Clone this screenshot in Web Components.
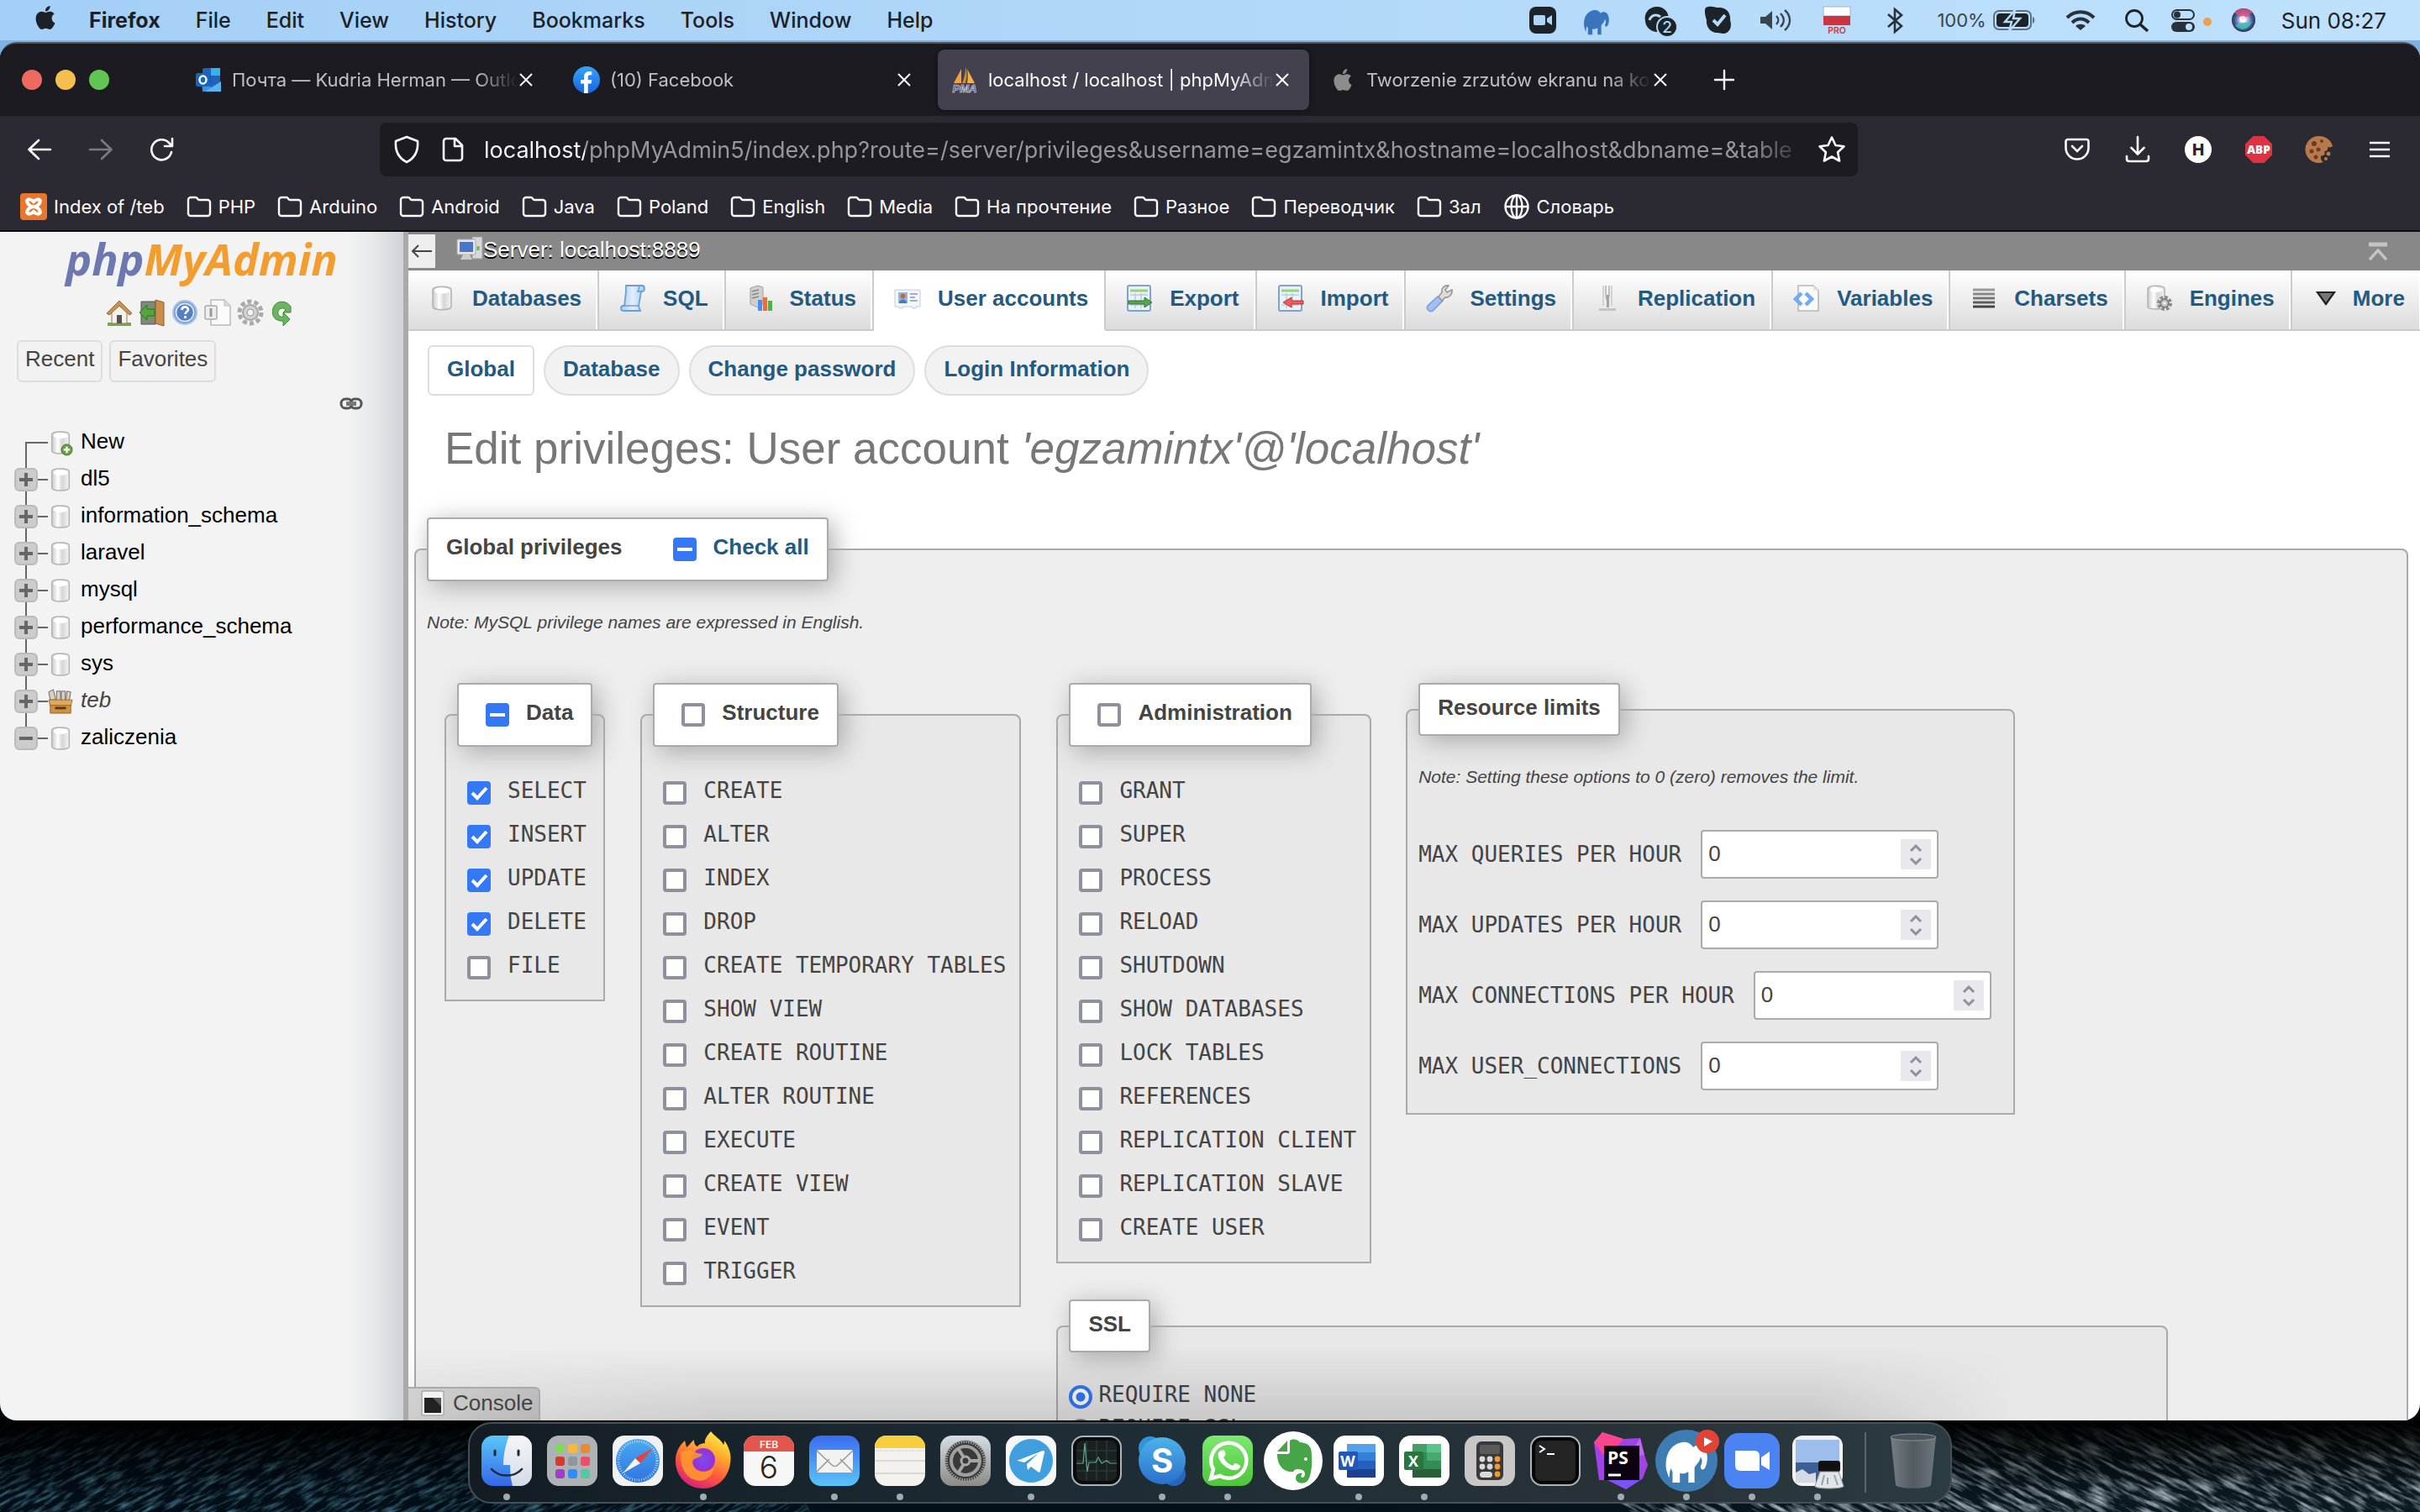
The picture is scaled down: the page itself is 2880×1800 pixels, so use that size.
<!DOCTYPE html>
<html lang="en">
<head>
<meta charset="utf-8">
<title>localhost / localhost | phpMyAdmin</title>
<style>
html,body{margin:0;height:100%}
body{background:linear-gradient(#7fb2e2 50%,#01070b 50%);font-family:"Liberation Sans",Arial,sans-serif;font-size:26px;color:#444;overflow:hidden}
</style>
</head>
<body>
<mac-desktop></mac-desktop>
<script>
const APPLE='<path d="M12.152 6.896c-.948 0-2.415-1.078-3.96-1.04-2.04.027-3.91 1.183-4.961 3.014-2.117 3.675-.546 9.103 1.519 12.09 1.013 1.454 2.208 3.09 3.792 3.039 1.52-.065 2.09-.987 3.935-.987 1.831 0 2.35.987 3.96.948 1.637-.026 2.676-1.48 3.676-2.948 1.156-1.688 1.636-3.325 1.662-3.415-.039-.013-3.182-1.221-3.22-4.857-.026-3.04 2.48-4.494 2.597-4.559-1.429-2.09-3.623-2.324-4.39-2.376-2-.156-3.675 1.09-4.61 1.09zM15.53 3.83c.843-1.012 1.4-2.427 1.245-3.83-1.207.052-2.662.805-3.532 1.818-.78.896-1.454 2.338-1.273 3.714 1.338.104 2.715-.688 3.559-1.701"/>';
const CYL='<linearGradient id="c" x1="0" x2="1"><stop offset="0" stop-color="#c8c8c8"/><stop offset=".35" stop-color="#fff"/><stop offset=".6" stop-color="#d6d6d6"/><stop offset="1" stop-color="#f4f4f4"/></linearGradient>';
const ELE='M5 30C3 18 8 9 17 7c5-1 8 1 10 4 3-3 8-2 10 2 2 4 2 10 0 14-1 3-4 3-4 0 1-3 2-5 0-8-1 5-4 6-5 9v12h-5v-9c-3 2-5 2-7 1v8h-6v-9c-1-1-1-2-1-3-2 3-1 6-2 8z';
const box=(w,h,s)=>[w,h,s];
/* each entry: width, height, drawing */
const ICONS={
apple:box(24,24,`<g fill="#1b2127">${APPLE}</g>`),
appleGray:box(24,24,`<g fill="#8c8c8c">${APPLE}</g>`),
mbZoom:box(40,48,'<rect x="4" y="8" width="32" height="32" rx="8" fill="#1d2429"/><rect x="9" y="18" width="14" height="12" rx="2" fill="#aed6f9"/><path d="M25 22l6-4v12l-6-4z" fill="#aed6f9"/>'),
mbEle:box(48,48,`<path transform="translate(1 6) scale(.88)" d="${ELE}" fill="#3a74bd"/>`),
mbCC:box(48,48,'<path d="M20 8c9 0 14 7 14 15a14 14 0 0 1-28 2C4 16 10 8 20 8z" fill="#1d2429"/><path d="M11 24c2-6 8-8 13-4" stroke="#b0d8f9" stroke-width="3" fill="none"/><circle cx="32" cy="32" r="12" fill="#1d2429" stroke="#b0d8f9" stroke-width="2"/><text x="32" y="39" font-family="Inter,sans-serif" font-size="19" text-anchor="middle" fill="#b0d8f9">2</text>'),
mbSkype:box(44,48,'<path d="M6 9c6-3 11 0 16 0 9 0 14 7 13 15 2 6 1 12-4 15-4 2-8 0-11 0-9 0-14-8-13-15C5 18 4 12 6 9z" fill="#1d2429"/><path d="M15 24l5 5 9-11" fill="none" stroke="#b3daf9" stroke-width="4"/>'),
mbVol:box(50,48,'<path d="M3 20h6l8-7v22l-8-7H3z" fill="#38444e"/><path d="M22 19c3 3 3 7 0 10M27 16c5 5 5 11 0 16M32 12c8 7 8 17 0 24" fill="none" stroke="#38444e" stroke-width="2.4"/>'),
mbFlag:box(50,48,'<rect x="4" y="8" width="32" height="11" fill="#fff" stroke="#9db5c8"/><rect x="4" y="19" width="32" height="11" fill="#cf3340"/><text x="20" y="40" font-family="Inter,sans-serif" font-size="10.5" font-weight="600" text-anchor="middle" fill="#c93a4b">PRO</text>'),
mbBt:box(41,48,'<path d="M7 17l16 14-8 7V11l8 7L7 32" fill="none" stroke="#27323b" stroke-width="2.6"/>'),
mbBat:box(60,48,'<rect x="1" y="13" width="44" height="22" rx="6" fill="none" stroke="#5d7280" stroke-width="2"/><rect x="4" y="16" width="38" height="16" rx="4" fill="#1d2429"/><path d="M47 20v8c3-1 3-7 0-8" fill="#5d7280"/><path d="M26 12l-12 14h8l-3 11 13-15h-8z" fill="#1d2429" stroke="#b7dcfa" stroke-width="2.5"/>'),
mbWifi:box(48,48,'<g fill="none" stroke="#27323b" stroke-width="4"><path d="M4 21c9-9 23-9 32 0"/><path d="M10 27c6-6 14-6 20 0"/></g><path d="M14 31c3-3 9-3 12 0l-6 5z" fill="#27323b"/>'),
mbFind:box(32,48,'<circle cx="12" cy="22" r="9.5" fill="none" stroke="#1d2429" stroke-width="2.8"/><path d="M19 29l9 8" stroke="#1d2429" stroke-width="3.4"/>'),
mbCtl:box(48,48,'<rect x="1" y="12" width="26" height="11" rx="5.5" fill="none" stroke="#27323b" stroke-width="2"/><circle cx="7" cy="17.500" r="4" fill="#27323b"/><rect x="0" y="26" width="28" height="12" rx="6" fill="#27323b"/><circle cx="21" cy="32" r="4" fill="#bfe0fb"/><circle cx="43" cy="26" r="5" fill="#eda04e"/>'),
mbSiri:box(37,48,'<radialGradient id="g"><stop offset="0" stop-color="#fff"/><stop offset=".35" stop-color="#c7b2e8"/><stop offset=".7" stop-color="#3e6aa5"/><stop offset="1" stop-color="#3a2c4c"/></radialGradient><circle cx="14" cy="24" r="14" fill="url(#g)"/><path d="M3 15c6-7 16-5 22-1-4 4-8 6-12 10-3-4-6-6-10-9z" fill="#e0507f" opacity=".8"/><path d="M4 30c5 7 15 7 20-4-7 1-12 0-20 4z" fill="#3fc0b0" opacity=".85"/><circle cx="13" cy="23" r="4" fill="#fff" opacity=".8"/>'),
outlook:box(32,32,'<rect x="9" y="2" width="21" height="26" rx="2" fill="#1f64b8"/><path d="M19 2h11v9H19z" fill="#35b1ee"/><path d="M9 11h10v9H9z" fill="#1550a0"/><path d="M8 18l12 7 11-7v12H9z" fill="#3b94da"/><path d="M31 18v12H12z" fill="#56b6f0"/><rect x="1" y="8" width="17" height="16" rx="2" fill="#1566bf"/><ellipse cx="9.500" cy="16" rx="4" ry="4.600" fill="none" stroke="#fff" stroke-width="2.400"/>'),
facebook:box(32,32,'<linearGradient id="f" x2="0" y2="1"><stop stop-color="#35a4f8"/><stop offset="1" stop-color="#1a63e0"/></linearGradient><circle cx="16" cy="16" r="16" fill="url(#f)"/><path d="M13 32V20.500H9V16h4v-3.500C13 8.500 15.500 6 19.300 6c1.500 0 3 .3 3 .3v4h-2c-2 0-2.600 1.200-2.600 2.500V16h4.600l-.8 4.500h-3.800V32z" fill="#fff"/>'),
pma:box(32,32,'<path d="M12 3L3 20h9z" fill="#f0a03c"/><path d="M17 0c2 7 2 13 0 20h-4C16 13 17 7 17 0z" fill="#d98a26"/><path d="M19 3l9 17h-9c1-6 1-11 0-17z" fill="#f6b04a"/><text x="16" y="31" font-family="Liberation Sans" font-size="13" font-weight="700" font-style="italic" text-anchor="middle" fill="#3a3f68" stroke="#e9e9f4" stroke-width=".6">PMA</text>'),
close:box(16,16,'<path d="M1 1l14 14M15 1L1 15" stroke="#fbfbfe" stroke-width="2"/>'),
plus:box(24,24,'<path d="M12 1v22M1 12h22" stroke="#fbfbfe" stroke-width="2.400" stroke-linecap="round"/>'),
back:box(30,28,'<path d="M28 14H3M14 3L2.500 14 14 25" fill="none" stroke="#fbfbfe" stroke-width="2.600" stroke-linecap="round" stroke-linejoin="round"/>'),
fwd:box(30,28,'<path d="M2 14h25M16 3l11.500 11L16 25" fill="none" stroke="#7b7a82" stroke-width="2.600" stroke-linecap="round" stroke-linejoin="round"/>'),
reload:box(30,28,'<path d="M26 17a12 12 0 1 1-3-11l3 3M27 1v9h-9" fill="none" stroke="#fbfbfe" stroke-width="2.600" stroke-linecap="round" stroke-linejoin="round"/>'),
shield:box(32,34,'<path d="M16 2l13 5c1 12-3 20-13 25C6 27 2 19 3 7z" fill="none" stroke="#fbfbfe" stroke-width="2.600" stroke-linejoin="round"/>'),
page:box(26,30,'<path d="M5 2h11l8 8v15a3 3 0 0 1-3 3H5a3 3 0 0 1-3-3V5a3 3 0 0 1 3-3zM15 2v9h9" fill="none" stroke="#fbfbfe" stroke-width="2.600" stroke-linejoin="round"/>'),
star:box(34,34,'<path d="M17 2.500l4.500 9.500 10 1.300-7.400 7 2 10.200L17 25.500 7.900 30.500l2-10.200-7.400-7 10-1.300z" fill="none" stroke="#fbfbfe" stroke-width="2.600" stroke-linejoin="round"/>'),
pocket:box(32,32,'<path d="M5 4h22c1.500 0 2.500 1 2.500 2.500V14a13.500 13.500 0 0 1-27 0V6.500C2.500 5 3.500 4 5 4z" fill="none" stroke="#fbfbfe" stroke-width="2.600"/><path d="M10 12l6 6 6-6" fill="none" stroke="#fbfbfe" stroke-width="2.600" stroke-linecap="round"/>'),
download:box(32,32,'<path d="M16 1v20M8.500 14l7.500 7.500 7.500-7.500M3 24v3c0 2 1 3 3 3h20c2 0 3-1 3-3v-3" fill="none" stroke="#fbfbfe" stroke-width="2.600" stroke-linecap="round" stroke-linejoin="round"/>'),
hbadge:box(32,32,'<circle cx="16" cy="16" r="16" fill="#fff"/><text x="16" y="23" font-family="Inter,sans-serif" font-size="19" font-weight="800" text-anchor="middle" fill="#25242c">H</text>'),
abp:box(32,32,'<path d="M9.500 0h13L32 9.500v13L22.500 32h-13L0 22.500v-13z" fill="#de3343"/><text x="16" y="21" font-family="Open Sans,sans-serif" font-size="13.500" font-weight="800" text-anchor="middle" fill="#fff">ABP</text>'),
cookie:box(32,32,'<path d="M16 0a16 16 0 1 0 5 31c-3-2-4-5-2-8 3 1 5-2 3-5 3 0 5-2 4-5 3 1 5 0 6-1C30 4 23 0 16 0z" fill="#b87a4b"/><g fill="#6d3d20"><circle cx="10" cy="9" r="3"/><circle cx="19" cy="6" r="2"/><circle cx="7" cy="18" r="2.500"/><circle cx="15" cy="16" r="2.500"/><circle cx="12" cy="25" r="2.500"/></g><circle cx="27" cy="21" r="2.500" fill="#b87a4b"/><circle cx="24" cy="27" r="2" fill="#b87a4b"/>'),
burger:box(32,32,'<path d="M4 8h24M4 16h24M4 24h24" stroke="#fbfbfe" stroke-width="2.600"/>'),
xampp:box(32,32,'<rect width="32" height="32" rx="4" fill="#e8762c"/><g fill="none" stroke="#fff" stroke-width="4"><path d="M8 8c0 5 4 8 8 8s8-3 8-8M8 24c0-5 4-8 8-8s8 3 8 8"/><path d="M8 10c1-4 5-3 8 0 3-3 7-4 8 0M8 22c1 4 5 3 8 0 3 3 7 4 8 0"/></g>'),
folder:box(30,26,'<path d="M2 5a3 3 0 0 1 3-3h6c2 0 2 3 4 3h10a3 3 0 0 1 3 3v13a3 3 0 0 1-3 3H5a3 3 0 0 1-3-3z" fill="none" stroke="#fbfbfe" stroke-width="2.400"/>'),
globe:box(32,32,'<g fill="none" stroke="#fbfbfe" stroke-width="2.400"><circle cx="16" cy="16" r="13.500"/><ellipse cx="16" cy="16" rx="6.500" ry="13.500"/><path d="M2.500 16h27M16 2.500v27"/></g>'),
home:box(32,32,'<path d="M2 28h28v4H2z" fill="#7ba545"/><path d="M7 15v14h18V15l-9-9z" fill="#f4f0ea" stroke="#8d7f6f"/><path d="M13 19h6v10h-6z" fill="#555"/><path d="M1 17L16 2l15 15-3 2L16 8 4 19z" fill="#c89454" stroke="#94683a"/>'),
exit:box(32,32,'<path d="M3 3h17v27H3z" fill="#7d8b75" stroke="#555"/><path d="M20 1l10 3v28l-10-3z" fill="#c98e4b" stroke="#8e5c2b"/><path d="M1 16l9-9v5h9v8h-9v5z" fill="#52a63b" stroke="#2b741c"/>'),
help:box(32,32,'<circle cx="16" cy="16" r="14" fill="#7fa4d9" stroke="#a8c0e4" stroke-width="2"/><circle cx="16" cy="16" r="10.500" fill="#5580c4" stroke="#e4edf9" stroke-width="1.500"/><path d="M12.500 13c0-5 7.500-4.500 7.500-.5 0 2.500-3.500 2.500-3.500 5.500M16.500 20v3" fill="none" stroke="#fff" stroke-width="2.600"/>'),
docs:box(32,32,'<path d="M8 1h16l7 7v23H8z" fill="#fbfbfb" stroke="#bbb" stroke-width="1.500"/><path d="M24 1v7h7" fill="#ddd" stroke="#bbb"/><rect x="1" y="8" width="14" height="16" rx="2" fill="#eee" stroke="#aaa" stroke-width="1.500"/><path d="M8 11v10" stroke="#999" stroke-width="3"/>'),
gear:box(32,32,'<circle cx="16" cy="16" r="13" fill="none" stroke="#a9a9a9" stroke-width="5" stroke-dasharray="5 3.170"/><circle cx="16" cy="16" r="9" fill="#d2d2d2" stroke="#a5a5a5" stroke-width="2"/><circle cx="16" cy="16" r="4" fill="#f3f3f3" stroke="#999"/>'),
sync:box(32,32,'<path d="M25 9C20 1 7 1 4 11c-3 10 4 16 12 15v6l8-8-8-8v5c-4 1-7-2-6-6 1-5 7-5 9-2l-3 3h9z" fill="#6cb560" stroke="#3c8a37"/>'),
link:box(28,18,'<g fill="none" stroke="#555" stroke-width="3"><rect x="2" y="3" width="13" height="11" rx="5"/><rect x="13" y="3" width="13" height="11" rx="5"/></g><rect x="8" y="6" width="12" height="5" fill="#777"/>'),
db:box(32,32,CYL+'<path d="M5 6C5 1 27 1 27 6v20c0 5-22 5-22 0z" fill="url(#c)" stroke="#b4b4b4" stroke-width="1.600"/><ellipse cx="16" cy="7" rx="9" ry="3.500" fill="#fff"/>'),
dbNew:box(32,32,CYL+'<path d="M5 6C5 1 27 1 27 6v20c0 5-22 5-22 0z" fill="url(#c)" stroke="#b4b4b4" stroke-width="1.600"/><ellipse cx="16" cy="7" rx="9" ry="3.500" fill="#fff"/><circle cx="24" cy="25" r="7" fill="#62a33b" stroke="#3f7c20"/><path d="M24 21v8M20 25h8" stroke="#fff" stroke-width="2.500"/>'),
box:box(32,32,'<path d="M3 14L1 4l6-3 3 13zM11 3h5v12h-5zM17 3h5v12h-5zM24 3l5 1-2 11h-4z" fill="#d9d2b8" stroke="#6c5a7c"/><path d="M1 14h30l-2 8H3z" fill="#e0a95f" stroke="#a26d27"/><path d="M3 21h26v10H3z" fill="#cf9146" stroke="#96621f"/><path d="M9 23h14v3H9z" fill="#5b3a12"/>'),
server:box(32,32,'<path d="M19 1h12v26H19z" fill="#d8d8d8" stroke="#999"/><rect x="1" y="4" width="22" height="18" rx="1" fill="#e6e6e6" stroke="#aaa"/><rect x="4" y="7" width="16" height="12" fill="#4976c6"/><path d="M8 22h8l3 6H5z" fill="#ccc"/><path d="M26 12v5" stroke="#5b5" stroke-width="3"/>'),
sql:box(32,32,'<linearGradient id="s" x2="1"><stop stop-color="#a9ccf2"/><stop offset=".5" stop-color="#e2effd"/><stop offset="1" stop-color="#a9ccf2"/></linearGradient><path d="M8 1h19c4 0 4 7 0 7h-1l-3 17 2 6H5c-4 0-4-6 0-6h1L8 8z" fill="url(#s)" stroke="#6e9fd2" stroke-width="1.800"/><path d="M5 25h18M26 8h-4c2-2 1-5 2-7" fill="none" stroke="#6e9fd2" stroke-width="1.500"/>'),
status:box(32,32,'<path d="M5 4l9-3 6 2v20l-6 4-9-4z" fill="#cfcfcf" stroke="#a0a0a0"/><path d="M7 8l8-2M7 12l8-2M7 16l8-2" stroke="#888" stroke-width="1.500"/><path d="M14 18h5v13h-5z" fill="#4c8df0"/><path d="M20 15h5v16h-5z" fill="#ef6b40"/><path d="M26 19h5v12h-5z" fill="#52b052"/>'),
user:box(32,32,'<path d="M1 6h30v20h-5v2h-4v-2H10v2H6v-2H1z" fill="#f4f6f9" stroke="#c6ccd4"/><rect x="5" y="9" width="11" height="13" fill="#8db9ee"/><circle cx="10.500" cy="13.500" r="3" fill="#b3713e"/><path d="M6 22c0-6 9-6 9 0z" fill="#4a78c0"/><path d="M19 11h9M19 15h6M19 19h9" stroke="#9bb1ca" stroke-width="2"/>'),
exp:box(32,32,'<rect x="2" y="1" width="27" height="30" rx="2" fill="#eaf2fc" stroke="#7da3d3" stroke-width="2"/><path d="M5 7h21" stroke="#9fd06f" stroke-width="3"/><path d="M5 12h21M5 24h21M11 10v18M18 10v18" stroke="#b9cbe3" stroke-width="1.500"/><path d="M3 19h19v-4l9 6-9 6v-4H3z" fill="#5aa350" stroke="#35762d"/>'),
imp:box(32,32,'<rect x="2" y="1" width="27" height="30" rx="2" fill="#eaf2fc" stroke="#7da3d3" stroke-width="2"/><path d="M5 7h21" stroke="#9fd06f" stroke-width="3"/><path d="M5 12h21M5 24h21M11 10v18M18 10v18" stroke="#b9cbe3" stroke-width="1.500"/><path d="M31 19H17v-4l-10 6 10 6v-4h14z" fill="#ec5f5f" stroke="#c52f2f"/>'),
wrench:box(32,32,'<path d="M14 14l6 5-12 12c-4 2-8-2-6-6z" fill="#a3bff0" stroke="#7d9cdc" stroke-width="1.600"/><path d="M15 14l4-5c-1-5 3-9 8-8l-4 5 2 3 6-3c1 5-4 10-8 9l-4 4z" fill="#ddd" stroke="#999" stroke-width="1.600"/>'),
repl:box(32,32,'<path d="M11 1v24M21 1v24" fill="none" stroke="#d2d2d2" stroke-width="2"/><path d="M14 1v12l2 8 2-8V1" fill="none" stroke="#b0b0b0" stroke-width="1.500"/><path d="M15 12h3v15h-3z" fill="#a4a4a4"/><path d="M6 28h20v3H6z" fill="#c4c4c4"/>'),
vars:box(32,32,'<path d="M6 1h18l6 6v24H6z" fill="#fafafa" stroke="#b8b8b8" stroke-width="1.600"/><path d="M24 1v6h6" fill="#e4e4e4"/><path d="M10 10l-7 7 7 7M15 10l7 7-7 7" fill="none" stroke="#6fabed" stroke-width="4.500"/>'),
chars:box(32,32,'<path d="M3 6h26" stroke="#999" stroke-width="3"/><path d="M3 11h26" stroke="#888" stroke-width="3"/><path d="M3 16h26" stroke="#777" stroke-width="3"/><path d="M3 21h26" stroke="#5f5f5f" stroke-width="3"/><path d="M3 26h26" stroke="#444" stroke-width="3"/>'),
engine:box(32,32,CYL+'<path d="M2 5C2 0 22 0 22 5v21c0 4-20 4-20 0z" fill="url(#c)" stroke="#b4b4b4" stroke-width="1.600"/><ellipse cx="12" cy="6" rx="7" ry="3" fill="#fff"/><circle cx="22" cy="22" r="7" fill="none" stroke="#8b8b8b" stroke-width="4" stroke-dasharray="3.500 2"/><circle cx="22" cy="22" r="5" fill="#bbb" stroke="#777" stroke-width="1.500"/><circle cx="22" cy="22" r="2" fill="#eee"/>'),
more:box(24,20,'<path d="M2 3h20L12 17z" fill="#777" stroke="#222" stroke-width="2.200"/>'),
toTop:box(24,24,'<path d="M1 4h22" stroke="#c4c4c4" stroke-width="5"/><path d="M2 22l10-11 10 11" fill="none" stroke="#c4c4c4" stroke-width="3.400"/>'),
larr:box(26,20,'<path d="M25 10H2M9 3l-7 7 7 7" fill="none" stroke="#444" stroke-width="2"/>'),
console:box(32,32,'<rect x="3" y="1" width="26" height="29" rx="2" fill="#f2f2f2" stroke="#aaa" stroke-width="1.500"/><rect x="6" y="9" width="20" height="18" fill="#222"/><path d="M16 9h10v10z" fill="#555"/>'),
spin:box(36,36,'<path d="M12 14l6-6 6 6M12 23l6 6 6-6" fill="none" stroke="#8f8f9d" stroke-width="3"/>'),
/* dock */
dFinder:box(60,60,'<linearGradient id="a" x2="0" y2="1"><stop stop-color="#5ac8fa"/><stop offset="1" stop-color="#3466e8"/></linearGradient><linearGradient id="b" x2="0" y2="1"><stop stop-color="#f6f6f8"/><stop offset="1" stop-color="#d4dae6"/></linearGradient><rect width="60" height="60" rx="14" fill="url(#a)"/><path d="M33 0h13a14 14 0 0 1 14 14v32a14 14 0 0 1-14 14h-9c-2-7-3-15-3-25h-8C26 22 29 10 33 0z" fill="url(#b)"/><path d="M16 18v5M44 18v5" stroke="#1c2b3c" stroke-width="3" stroke-linecap="round"/><path d="M12 40c9 10 27 10 36 0" fill="none" stroke="#1c2b3c" stroke-width="2.600" stroke-linecap="round"/>'),
dLaunch:box(60,60,'<rect width="60" height="60" rx="14" fill="#aeb2b4"/>'+['#7ed957','#f6b93b','#ee8a2e','#d43a2d','#8e979c','#ef4d68','#a13ec9','#2f8df5','#4fcba2'].map((c,i)=>`<rect x="${10+i%3*15}" y="${10+(i/3|0)*15}" width="11" height="11" rx="3" fill="${c}"/>`).join('')),
dSafari:box(60,60,'<linearGradient id="a" x2="0" y2="1"><stop stop-color="#4aa9f2"/><stop offset="1" stop-color="#2f74e0"/></linearGradient><rect width="60" height="60" rx="14" fill="#f1f1f3"/><circle cx="30" cy="30" r="26" fill="url(#a)"/><circle cx="30" cy="30" r="23" fill="none" stroke="#cfe4fa" stroke-width="3" stroke-dasharray=".8 2"/><path d="M48 15L33 33l-6-6z" fill="#e8413a"/><path d="M12 45l15-18 6 6z" fill="#f4f4f4"/>'),
dFox:box(60,60,'<linearGradient id="a" x1=".8" x2=".3" y2="1"><stop stop-color="#fff44f"/><stop offset=".3" stop-color="#ffb42e"/><stop offset=".65" stop-color="#ff5a3c"/><stop offset="1" stop-color="#d5207c"/></linearGradient><radialGradient id="b"><stop stop-color="#7a4cf0"/><stop offset="1" stop-color="#9b2fd0"/></radialGradient><path d="M39-5c4 6 12 9 15 16 1-2 1-4 1-5 6 8 9 18 7 27-2 17-15 30-32 30C12 63-2 50-3 32-4 22 1 12 8 6l2 8c4-3 5-6 9-9 0 4 1 7 4 8 2-3 6-4 9-4-1-5 3-9 7-14z" fill="url(#a)"/><circle cx="30" cy="29" r="14" fill="url(#b)"/><path d="M3 20c6-3 14-3 20 1l6 1c-2 5-8 4-11 7-2 3 0 9 5 12 7 4 16 1 20-4-1 12-12 19-22 16C8 50 2 36 3 20z" fill="#ff9a2e" opacity=".85"/>'),
dCal:box(60,60,'<rect width="60" height="60" rx="14" fill="#f8f7f7"/><path d="M0 19v-5A14 14 0 0 1 14 0h32a14 14 0 0 1 14 14v5z" fill="#e2564c"/><text x="30" y="15" font-family="Inter,sans-serif" font-size="12" font-weight="600" text-anchor="middle" fill="#fff">FEB</text><text x="30" y="51" font-family="Inter,sans-serif" font-size="37" font-weight="300" text-anchor="middle" fill="#222">6</text>'),
dMail:box(60,60,'<linearGradient id="a" x2="0" y2="1"><stop stop-color="#3a6df0"/><stop offset="1" stop-color="#5ac4f8"/></linearGradient><rect width="60" height="60" rx="14" fill="url(#a)"/><rect x="9" y="17" width="43" height="27" rx="2" fill="#f2f2f2"/><path d="M9 43l15-15M52 43L37 28M9 18l18 17c2 2 5 2 7 0l18-17" fill="none" stroke="#9a9a9a" stroke-width="1.600"/>'),
dNotes:box(60,60,'<rect width="60" height="60" rx="14" fill="#f4f2ee"/><path d="M0 15v-1A14 14 0 0 1 14 0h32a14 14 0 0 1 14 14v1z" fill="#f8cd3e"/><path d="M0 18h60" stroke="#bbb" stroke-dasharray="1 1"/><path d="M0 30h60M0 45h60" stroke="#d2d0cc" stroke-width="1.600"/>'),
dPrefs:box(60,60,'<linearGradient id="a" x2="0" y2="1"><stop stop-color="#d5dde4"/><stop offset="1" stop-color="#8b8a88"/></linearGradient><rect width="60" height="60" rx="14" fill="url(#a)"/><circle cx="30" cy="30" r="24" fill="#3a3a3a"/><circle cx="30" cy="30" r="23" fill="none" stroke="#9a9a9a" stroke-width="4" stroke-dasharray="1.600 1.400"/><circle cx="30" cy="30" r="17" fill="none" stroke="#9f9f9f" stroke-width="4"/><circle cx="30" cy="30" r="5" fill="none" stroke="#aaa" stroke-width="3"/><path d="M34 30h13M28 34l-7 11M28 26l-7-11" stroke="#a5a5a5" stroke-width="4"/>'),
dTele:box(60,60,'<rect width="60" height="60" rx="14" fill="#f5f6f7"/><circle cx="30" cy="30" r="26" fill="#419fdd"/><path d="M13 30l31-12c1 0 2 0 2 2l-5 22c0 2-2 2-3 1l-8-6-4 4-1-7 14-13-17 11-8-2z" fill="#fff"/>'),
dAct:box(60,60,'<rect x="1" y="1" width="58" height="58" rx="13" fill="#0b0b0b" stroke="#a9b6bb" stroke-width="2"/><rect x="6" y="6" width="48" height="48" rx="7" fill="#18211f"/><path d="M6 18h48M6 30h48M6 42h48M18 6v48M30 6v48M42 6v48" stroke="#35443f"/><path d="M6 33h8l2-24 3 34 2-11h8l3-6 4 7 6-3 4 3h8" fill="none" stroke="#5fa88f" stroke-width="1.200"/>'),
dSkype:box(60,60,'<linearGradient id="a" x2="0" y2="1"><stop stop-color="#4db2ea"/><stop offset="1" stop-color="#2a70cb"/></linearGradient><circle cx="16" cy="15" r="14" fill="#2f93d8"/><circle cx="44" cy="46" r="14" fill="#2766bd"/><circle cx="30" cy="30" r="28" fill="url(#a)"/><text x="30" y="44" font-family="Inter,sans-serif" font-size="40" font-weight="700" text-anchor="middle" fill="#fff">S</text>'),
dWhats:box(60,60,'<linearGradient id="a" x2="0" y2="1"><stop stop-color="#7bea70"/><stop offset="1" stop-color="#4fc43a"/></linearGradient><rect width="60" height="60" rx="14" fill="url(#a)"/><path d="M10 51l3-11a21 21 0 1 1 8 8z" fill="none" stroke="#fff" stroke-width="4.500"/><path d="M22 18c3-2 4-1 5 2 1 4 0 4-2 6 3 5 6 8 11 10 2-3 3-4 6-2 4 2 4 3 2 5-7 8-28-7-25-18 0-1 1-2 3-3z" fill="#fff"/>'),
dEver:box(60,60,'<circle cx="30" cy="30" r="35" fill="#fff"/><path d="M11 22h12c2 0 3-1 3-3V6c4-3 10-1 12 2 10 1 14 4 14 16 1 12-1 25-5 30-4 4-13 4-14-3 0-5 4-7 8-6-2 2-2 5 0 5 4-1 4-7 0-9-4-1-8-3-11 2-10 1-19-6-19-21z" fill="#45a547"/><circle cx="45" cy="28" r="2" fill="#fff"/><path d="M11 19L23 6v13z" fill="#45a547"/>'),
dWord:box(60,60,'<rect width="60" height="60" rx="14" fill="#fff"/><path d="M16 10h34v10H16z" fill="#54a3ea"/><path d="M16 20h34v10H16z" fill="#3380d8"/><path d="M16 30h34v10H16z" fill="#2560bd"/><path d="M16 40h34v10H16z" fill="#1c3f8f"/><rect x="6" y="19" width="23" height="22" rx="2" fill="#2256b8"/><text x="17" y="37" font-family="Open Sans,sans-serif" font-size="18" font-weight="700" text-anchor="middle" fill="#fff">W</text>'),
dExcel:box(60,60,'<rect width="60" height="60" rx="14" fill="#fff"/><path d="M16 10h34v40H16z" fill="#348a52"/><path d="M33 10h17v10H33z" fill="#5dc48d"/><path d="M33 20h17v10H33z" fill="#46a96d"/><path d="M16 10h17v10H16z" fill="#429f66"/><path d="M16 40h34v10H16z" fill="#285f38"/><rect x="6" y="19" width="23" height="22" rx="2" fill="#2a7640"/><text x="17" y="37" font-family="Open Sans,sans-serif" font-size="18" font-weight="700" text-anchor="middle" fill="#fff">X</text>'),
dCalc:box(60,60,'<rect width="60" height="60" rx="14" fill="#c9c7c5"/><rect x="14" y="7" width="32" height="46" rx="6" fill="#39393b"/><rect x="18" y="11" width="24" height="11" rx="2" fill="#5a5a5c"/>'+[[21,28],[30,28],[39,28,1],[21,37],[30,37],[39,37,1],[39,46,1]].map(([x,y,o])=>`<circle cx="${x}" cy="${y}" r="3.400" fill="${o?'#f49a2c':'#d9d9d9'}"/>`).join('')+'<rect x="18" y="43" width="15" height="7" rx="3.500" fill="#d9d9d9"/>'),
dTerm:box(60,60,'<rect x="1" y="1" width="58" height="58" rx="13" fill="#050505" stroke="#a9b6bb" stroke-width="2"/><rect x="6" y="6" width="48" height="48" rx="7" fill="#232323"/><path d="M11 12l6 4-6 4M20 22h9" fill="none" stroke="#fff" stroke-width="2"/>'),
dPS:box(60,60,'<path d="M-2 8L8-4l25 8 20-1 5 20 4 12-6 16-20 13-22-11H4z" fill="#a243e8"/><path d="M-2 8L8-4l25 8-20 24z" fill="#fb4590"/><path d="M53 3l5 20-20 4z" fill="#bf63f2"/><path d="M36 64L16 53l20-15 20 13z" fill="#7b52f5"/><rect x="10" y="12" width="42" height="41" fill="#0b0312"/><text x="14" y="34" font-family="Open Sans,sans-serif" font-size="21" font-weight="700" fill="#fff">PS</text><path d="M15 47h15" stroke="#fff" stroke-width="3"/>'),
dMamp:box(60,60,`<circle cx="30" cy="30" r="37" fill="#3d7db3"/><path transform="translate(-1 -2) scale(1.450)" d="${ELE}" fill="#fff"/><circle cx="55" cy="7" r="14" fill="#e04437"/><path d="M51 2l10 5-10 6z" fill="#fff"/>`),
dZoom:box(60,60,'<rect x="-3" y="-3" width="66" height="66" rx="17" fill="#4b83f3"/><path d="M10 18h22c5 0 7 2 7 7v17H17c-5 0-7-2-7-7z" fill="#fff"/><path d="M41 26l10-7v22l-10-6z" fill="#fff"/>'),
dPrev:box(60,60,'<rect width="60" height="60" rx="12" fill="#f3f2f0"/><path d="M4 5h52v28H4z" fill="#9dbdec"/><path d="M4 32h52v24H4z" fill="#3c5f95"/><path d="M4 44l8-4 8 6 8-2v12H4z" fill="#d5dbe2"/><rect x="31" y="30" width="26" height="13" rx="3" fill="#111"/><path d="M33 43h22l6 17c1 4-36 4-34 0z" fill="#e2e6e9" stroke="#8f979f"/><path d="M38 47l-3 12M50 47l4 12M42 50v8" stroke="#9aa3ab" stroke-width="2" fill="none"/>'),
dTrash:box(60,60,'<linearGradient id="a" x2="1"><stop stop-color="#7d858a"/><stop offset=".5" stop-color="#565f64"/><stop offset="1" stop-color="#757d82"/></linearGradient><path d="M3 1h54l-6 58c-3 5-39 5-42 0z" fill="url(#a)" opacity=".9"/><ellipse cx="30" cy="2" rx="27" ry="4" fill="#4b5458" stroke="#899196"/>')
};
function define(name,css,html,fn){
  customElements.define(name,class extends HTMLElement{
    connectedCallback(){
      if(this.shadowRoot)return;
      const r=this.attachShadow({mode:'open'});
      r.innerHTML=`<style>:host{display:block;box-sizing:border-box}*{box-sizing:border-box}button{font:inherit;color:inherit;background:none;border:0;padding:0;margin:0}a{color:inherit;text-decoration:none}${css}</style>`+(typeof html==='function'?html(this):html);
      if(fn)fn(this,r);
    }
  });
}
define('ui-icon',':host{display:inline-flex;flex:none}svg{display:block;overflow:visible}',el=>{
  const [w,h,s]=ICONS[el.getAttribute('name')];
  const W=+el.getAttribute('size')||w,H=W*h/w;
  return `<svg width="${W}" height="${H}" viewBox="0 0 ${w} ${h}" aria-hidden="true">${s}</svg>`;
});

/* ---- system menu bar ---- */
define('mac-menubar',
`:host{display:flex;align-items:center;height:48px;flex:none;padding:0 40px;background:linear-gradient(90deg,#a4cff6,#bfe1fc);color:#1b2127;font:500 25px Inter,sans-serif}
nav{display:flex;gap:42px;align-items:center;flex:1}nav ui-icon{margin-right:-4px}b{font-weight:700}
.r{display:flex;gap:24px;align-items:center}.bat{display:flex;gap:8px;align-items:center;font-size:22px;font-weight:400;color:#38444e}
.time{font-weight:400;font-size:26px;margin-left:-2px}ui-icon{flex:none}`,
`<nav><button aria-label="Apple"><ui-icon name="apple" size="28"></ui-icon></button><button><b>Firefox</b></button>${['File','Edit','View','History','Bookmarks','Tools','Window','Help'].map(t=>`<button>${t}</button>`).join('')}</nav>
<div class="r">${['mbZoom','mbEle','mbCC','mbSkype','mbVol','mbFlag','mbBt'].map(n=>`<ui-icon name="${n}"></ui-icon>`).join('')}<span class="bat"><span>100%</span><ui-icon name="mbBat"></ui-icon></span>${['mbWifi','mbFind','mbCtl','mbSiri'].map(n=>`<ui-icon name="${n}"></ui-icon>`).join('')}<span class="time">Sun 08:27</span></div>`);

/* ---- browser chrome ---- */
define('browser-tab',
`:host{display:flex;align-items:center;width:442px;height:72px;margin-right:8px;padding:0 24px 0 16px;gap:12px;border-radius:8px;color:#c0c0c4;font:400 22px Inter,sans-serif}
:host([active]){background:#42414d;color:#fbfbfe;box-shadow:0 0 6px #0008}
span{flex:1;overflow:hidden;white-space:nowrap;-webkit-mask:linear-gradient(90deg,#000 calc(100% - 50px),#0000)}button{display:flex}
.i{width:32px;justify-content:center}.c{margin-left:-10px}`,
el=>`<ui-icon class="i" name="${el.getAttribute('icon')}" size="${el.getAttribute('icon')=='appleGray'?26:32}"></ui-icon><span><slot></slot></span><button class="c" aria-label="Close tab"><ui-icon name="close"></ui-icon></button>`);
define('book-mark',
`:host{flex:none}a{display:flex;align-items:center;gap:8px;font:400 22px Inter,sans-serif;color:#fbfbfe;white-space:nowrap}`,
el=>`<a href="#"><ui-icon name="${el.getAttribute('icon')||'folder'}"></ui-icon><slot></slot></a>`);
define('browser-chrome',
`:host{flex:none;background:#2b2a33;border-bottom:2px solid #0c0c0e}
.tabs{display:flex;align-items:center;height:86px;background:#1c1b22;padding-left:26px}
.lights{display:flex;gap:16px;width:190px}.lights i{width:24px;height:24px;border-radius:50%}
.plus{width:72px;display:flex;justify-content:center}
.bar{display:flex;align-items:center;height:80px;padding:0 32px}
.nav{display:flex;gap:43px;width:420px;align-items:center}
.url{flex:1;display:flex;align-items:center;height:64px;border-radius:8px;background:#1c1b22;padding:0 14px 0 16px}
input{flex:1;min-width:0;border:0;outline:0;background:none;margin:0 10px 0 24px;padding:0;height:40px;font:400 27px Inter,sans-serif;color:#a09fa6;text-overflow:clip;background:linear-gradient(90deg,#fbfbfe 120px,#98979f 120px calc(100% - 70px),#1c1b22);-webkit-background-clip:text;background-clip:text;-webkit-text-fill-color:transparent}
.page{margin-left:26px;display:flex}
.ext{display:flex;gap:40px;margin-left:245px;align-items:center}button{display:flex}
.marks{display:flex;align-items:center;gap:26px;height:56px;padding-left:24px}`,
`<div class="tabs"><div class="lights"><i style="background:#ed6a5e"></i><i style="background:#f5bf4f"></i><i style="background:#61c554"></i></div>
<browser-tab icon="outlook">Почта — Kudria Herman — Outlook</browser-tab><browser-tab icon="facebook">(10) Facebook</browser-tab><browser-tab icon="pma" active>localhost / localhost | phpMyAdmin</browser-tab><browser-tab icon="appleGray">Tworzenie zrzutów ekranu na komputerze</browser-tab><button class="plus" aria-label="New tab"><ui-icon name="plus"></ui-icon></button></div>
<div class="bar"><div class="nav"><button aria-label="Back"><ui-icon name="back"></ui-icon></button><button aria-label="Forward"><ui-icon name="fwd"></ui-icon></button><button aria-label="Reload"><ui-icon name="reload"></ui-icon></button></div>
<div class="url"><ui-icon name="shield"></ui-icon><span class="page"><ui-icon name="page"></ui-icon></span><input aria-label="Address" value="localhost/phpMyAdmin5/index.php?route=/server/privileges&amp;username=egzamintx&amp;hostname=localhost&amp;dbname=&amp;table"><button aria-label="Bookmark"><ui-icon name="star"></ui-icon></button></div>
<div class="ext">${['pocket','download','hbadge','abp','cookie','burger'].map(n=>`<button aria-label="${n}"><ui-icon name="${n}"></ui-icon></button>`).join('')}</div></div>
<div class="marks"><book-mark icon="xampp">Index of /teb</book-mark>${['PHP','Arduino','Android','Java','Poland','English','Media','На прочтение','Разное','Переводчик','Зал'].map(t=>`<book-mark>${t}</book-mark>`).join('')}<book-mark icon="globe">Словарь</book-mark></div>`);

/* ---- phpMyAdmin navigation ---- */
define('tree-item',
`:host{display:flex;align-items:center;height:44px;padding-left:17px;color:#000}
.rail{width:40px;height:100%;display:flex;align-items:center;
 background:linear-gradient(#666,#666) 13px 0/2px 100% no-repeat,linear-gradient(#666,#666) 13px 50%/27px 2px no-repeat}
:host([first]) .rail{background-position:13px 100%,13px 50%;background-size:2px 50%,27px 2px}
:host([last]) .rail{background-size:2px 50%,27px 2px}
button{width:28px;height:28px;border-radius:6px;background:#ccc;border:2px solid #bbb;display:flex}
svg{display:block}a{margin-left:9px;padding-bottom:4px}:host([italic]) a{font-style:italic;color:#444}`,
el=>`<div class="rail">${el.hasAttribute('first')?'':`<button aria-label="Expand/Collapse"><svg width="24" height="24"><path d="M4 12h16${el.hasAttribute('last')?'':'M12 4v16'}" stroke="#666" stroke-width="4"/></svg></button>`}</div><ui-icon name="${el.getAttribute('icon')||'db'}" size="30"></ui-icon><a href="#"><slot></slot></a>`);
define('pma-nav',
`:host{width:486px;flex:none;border-right:6px solid #aaa;background:linear-gradient(90deg,#f3f3f3 86%,#e8eaeb 92%,#d0d3d7)}
.logo{display:block;text-align:center;font:italic 700 52px/52px "Open Sans",sans-serif;color:#6c78af;padding:6px 0 0}
.logo span{color:#f29d2e}
.icons{display:flex;gap:7px;margin:22px 0 0 126px}
.btns{display:flex;gap:8px;margin:17px 0 0 20px}
.btns button{height:50px;padding:0 8px 6px;border:2px solid #ddd;border-radius:6px;background:#f2f2f2}
.link{display:flex;justify-content:flex-end;padding:17px 48px 0 0}.tree{margin-top:15px}`,
`<a class="logo" href="#">php<span>MyAdmin</span></a><div class="icons">${['home','exit','help','docs','gear','sync'].map(n=>`<ui-icon name="${n}"></ui-icon>`).join('')}</div>
<div class="btns"><button>Recent</button><button>Favorites</button></div><div class="link"><ui-icon name="link"></ui-icon></div>
<div class="tree"><tree-item first icon="dbNew">New</tree-item><tree-item>dl5</tree-item><tree-item>information_schema</tree-item><tree-item>laravel</tree-item><tree-item>mysql</tree-item><tree-item>performance_schema</tree-item><tree-item>sys</tree-item><tree-item italic icon="box">teb</tree-item><tree-item last>zaliczenia</tree-item></div>`);

/* ---- phpMyAdmin content ---- */
define('top-tab',
`:host{flex:none;height:72px;border-right:2px solid #ccc;border-bottom:2px solid #ccc;box-shadow:inset -2px 0 #fff;background:linear-gradient(#fff,#dcdcdc)}
:host([active]){background:#fff;border-bottom-color:#fff}:host([fill]){flex:1;border-right:0}
a{display:flex;align-items:center;height:66px;padding:0 19px 0 24px;gap:20px;font-weight:bold;color:#235a81;white-space:nowrap}
:host([fill]) a{padding-left:28px}`,
el=>`<a href="#"><ui-icon name="${el.getAttribute('icon')}"></ui-icon><slot></slot></a>`);
define('sub-tab',
`a{display:flex;align-items:center;height:60px;padding:0 21px 4px;border:2px solid #ddd;border-radius:30px;background:#f2f2f2;font-weight:bold;color:#235a81}
:host([active]) a{border-radius:6px;background:#fff}`,`<a href="#"><slot></slot></a>`);
define('pma-check',
`label{display:flex;align-items:center;gap:20px;white-space:nowrap}
.b{display:grid;width:28px;height:28px;flex:none}.b>*{grid-area:1/1;margin:0}
input{appearance:none;width:28px;height:28px;background:#fff;border:4px solid #8f8f9d;border-radius:4px}
:host([checked]) input,:host([mixed]) input{background:#3478f6;border-color:#3478f6}
svg{pointer-events:none}.t{padding-bottom:6px}`,
el=>`<label><span class="b"><input type="checkbox"${el.hasAttribute('checked')?' checked':''}><svg width="28" height="28" fill="none" stroke="#fff" stroke-width="4">${el.hasAttribute('checked')?'<path d="M6 14l6 6L23 8"/>':el.hasAttribute('mixed')?'<path d="M5 14h18"/>':''}</svg></span><span class="t"><slot></slot></span></label>`,
(el,r)=>{if(el.hasAttribute('mixed'))r.querySelector('input').indeterminate=true});
define('pma-set',
`fieldset{margin:0;border:2px solid #aaa;border-radius:8px 8px 0 0;padding:0 13px 12px;min-width:0;background:var(--set-bg,#e8e8e8)}
legend{display:flex;align-items:center;background:#fff;border:2px solid #aaa;border-radius:4px;padding:0 21px;height:76px;font-weight:bold;color:#444;white-space:nowrap;box-shadow:6px 6px 30px #aaa}
:host([plain]) legend{height:63px;padding-bottom:4px}`,
`<fieldset><legend><slot name="legend"></slot></legend><slot></slot></fieldset>`);
define('priv-group',
`.list{padding:26px 3px 3px 12px;font:26px "DejaVu Sans Mono",monospace}.list pma-check{height:52px;padding:12px 0}
.m{margin-left:11px}pma-check{line-height:28px}`,
el=>`<pma-set><pma-check slot="legend" class="m"${el.hasAttribute('mixed')?' mixed':''}>${el.getAttribute('heading')}</pma-check><div class="list">${el.getAttribute('items').split(',').map(t=>`<pma-check${t[0]=='*'?' checked':''}>${t.replace('*','')}</pma-check>`).join('')}</div></pma-set>`);
define('limit-field',
`:host{height:84px}.row{display:flex;align-items:center;gap:23px;padding-right:13px}
label{font:26px "DejaVu Sans Mono",monospace;white-space:nowrap}
.f{display:flex;align-items:center;width:283px;height:58px;border:2px solid #aaa;border-radius:4px;background:#fff;padding:0 7px}
input{flex:1;min-width:0;border:0;outline:0;background:none;padding:0 0 2px;font:26px "Liberation Sans",sans-serif;color:#444;appearance:textfield}
input::-webkit-inner-spin-button{display:none}button{background:#e9e9ed;display:flex}`,
el=>`<div class="row"><label for="n">${el.getAttribute('label')}</label><span class="f"><input id="n" type="number" value="0"><button aria-label="Step value" tabindex="-1"><ui-icon name="spin"></ui-icon></button></span></div>`);
define('radio-item',
`label{display:flex;align-items:center;gap:7px;height:40px;font:26px "DejaVu Sans Mono",monospace}
input{appearance:none;margin:0;width:28px;height:28px;border:4px solid #8f8f9d;border-radius:50%;background:#fff}
input:checked{border-color:#3478f6;background:radial-gradient(#3478f6 5px,#fff 6px)}span{padding-bottom:6px}`,
el=>`<label><input type="radio" name="ssl"${el.hasAttribute('checked')?' checked':''}><span><slot></slot></span></label>`);
define('pma-page',
`:host{flex:1;min-width:0;background:#fff;display:grid;grid-template-rows:minmax(0,1fr);overflow:hidden}
.page,.foot{grid-area:1/1}.page{overflow:hidden}
.head{display:flex;align-items:center;height:46px;background:#888;color:#fff;padding-right:38px}
.head a{flex:1;display:flex;align-items:center;margin-left:25px;text-shadow:0 2px 0 #000;padding-bottom:4px}
.arrow{width:32px;height:40px;background:#eee;justify-content:center;align-items:center;display:flex}
.tabs{display:flex}.subs{display:flex;gap:11px;padding:17px 23px 0}
h2{margin:33px 43px 52px;font-weight:normal;font-size:53px;line-height:60px;color:#777}
.main{--set-bg:#eee;margin:0 14px 0 7px}.main>span{padding-bottom:6px}
.main>*{--set-bg:#e8e8e8}
.note{margin:0;font-size:21px;font-style:italic;line-height:30px;padding-top:34px}
.ca{margin-left:60px;color:#235a81;line-height:28px}
.cols{display:flex;align-items:flex-start;gap:42px;padding:57px 21px 60px;margin-right:-12px}
.right{flex:1;display:flex;flex-direction:column;gap:43px;padding-right:10px}.row{display:flex;align-items:flex-start;gap:41px}
.limits{padding:48px 0 0}.limits limit-field:last-child{height:73px}
.ssl{width:84%}.radios{padding-top:33px}
.foot{align-self:end;z-index:1;height:90px;pointer-events:none;background:linear-gradient(#0000,#0002);-webkit-mask:linear-gradient(90deg,#0008,#000 15%,#000 70%,#0000 80%)}
.con{grid-area:1/1;align-self:end;justify-self:start;z-index:2;display:flex;align-items:center;gap:8px;height:40px;padding:0 7px 3px 13px;border:solid #aaa;border-width:2px 2px 0 0;border-radius:0 6px 0 0;background:linear-gradient(135deg,#d2d2d2,#b8b8b8)}`,
`<div class="page"><div class="head"><button class="arrow" aria-label="Hide panel"><ui-icon name="larr"></ui-icon></button><a href="#"><ui-icon name="server"></ui-icon>Server: localhost:8889</a><ui-icon name="toTop"></ui-icon></div>
<div class="tabs"><top-tab icon="db">Databases</top-tab><top-tab icon="sql">SQL</top-tab><top-tab icon="status">Status</top-tab><top-tab icon="user" active>User accounts</top-tab><top-tab icon="exp">Export</top-tab><top-tab icon="imp">Import</top-tab><top-tab icon="wrench">Settings</top-tab><top-tab icon="repl">Replication</top-tab><top-tab icon="vars">Variables</top-tab><top-tab icon="chars">Charsets</top-tab><top-tab icon="engine">Engines</top-tab><top-tab icon="more" fill>More</top-tab></div>
<div class="subs"><sub-tab active>Global</sub-tab><sub-tab>Database</sub-tab><sub-tab>Change password</sub-tab><sub-tab>Login Information</sub-tab></div>
<h2>Edit privileges: User account <em>'egzamintx'@'localhost'</em></h2>
<pma-set class="main"><span slot="legend">Global privileges</span><pma-check slot="legend" mixed class="ca">Check all</pma-check>
<p class="note">Note: MySQL privilege names are expressed in English.</p>
<div class="cols"><priv-group heading="Data" mixed items="*SELECT,*INSERT,*UPDATE,*DELETE,FILE"></priv-group><priv-group heading="Structure" items="CREATE,ALTER,INDEX,DROP,CREATE TEMPORARY TABLES,SHOW VIEW,CREATE ROUTINE,ALTER ROUTINE,EXECUTE,CREATE VIEW,EVENT,TRIGGER"></priv-group>
<div class="right"><div class="row"><priv-group heading="Administration" items="GRANT,SUPER,PROCESS,RELOAD,SHUTDOWN,SHOW DATABASES,LOCK TABLES,REFERENCES,REPLICATION CLIENT,REPLICATION SLAVE,CREATE USER"></priv-group>
<pma-set plain><span slot="legend">Resource limits</span><p class="note">Note: Setting these options to 0 (zero) removes the limit.</p><div class="limits"><limit-field label="MAX QUERIES PER HOUR"></limit-field><limit-field label="MAX UPDATES PER HOUR"></limit-field><limit-field label="MAX CONNECTIONS PER HOUR"></limit-field><limit-field label="MAX USER_CONNECTIONS"></limit-field></div></pma-set></div>
<pma-set plain class="ssl"><span slot="legend">SSL</span><div class="radios"><radio-item checked>REQUIRE NONE</radio-item><radio-item>REQUIRE SSL</radio-item></div></pma-set></div></div></pma-set></div>
<div class="foot"></div><button class="con"><ui-icon name="console"></ui-icon>Console</button>`);

/* ---- dock ---- */
define('dock-app',
`:host{width:78px;height:100%}button{width:78px;display:flex;flex-direction:column;align-items:center;padding-top:14px;gap:9px}
i{width:8px;height:8px;border-radius:50%}:host([open]) i{background:#9fabb1}`,
el=>`<button aria-label="${el.getAttribute('name')}"><ui-icon name="${el.getAttribute('name')}"></ui-icon><i></i></button>`);
define('mac-dock',
`:host{display:grid;height:109px;flex:none;overflow:hidden}
.sea,nav{grid-area:1/1}.sea{width:100%;height:100%;display:block}
nav{display:flex;justify-self:center;margin-top:2px;height:97px;padding:0 5px;border:2px solid #454f54;border-radius:28px;background:linear-gradient(90deg,#131c23,#1d2c35 40%,#283338 80%,#2b3b42)}
hr{margin:10px 17px 0 17px;border:0;width:2px;height:72px;background:#5b676c}`,
`<svg class="sea" preserveAspectRatio="none"><defs>
<filter id="n" x="0" y="0" width="1" height="1"><feTurbulence type="fractalNoise" baseFrequency=".03 .2" numOctaves="4" seed="4"/><feColorMatrix values="0 0 0 0 .38 0 0 0 0 .46 0 0 0 0 .51 2.600 0 0 0 -1.100"/></filter>
<filter id="m" x="0" y="0" width="1" height="1"><feTurbulence type="fractalNoise" baseFrequency=".04 .24" numOctaves="4" seed="9"/><feColorMatrix values="0 0 0 0 .05 0 0 0 0 .16 0 0 0 0 .23 2.400 0 0 0 -1.050"/></filter>
<linearGradient id="k" x2="0" y2="1"><stop stop-color="#000"/><stop offset="1" stop-color="#000" stop-opacity="0"/></linearGradient>
<linearGradient id="d"><stop stop-color="#020d16"/><stop offset=".5" stop-color="#03101a"/><stop offset="1" stop-color="#0c1a22"/></linearGradient></defs>
<rect width="100%" height="100%" fill="url(#d)"/>
<g transform="rotate(-28)"><rect x="-100" y="-20" width="900" height="620" filter="url(#m)"/></g>
<g transform="translate(2100 -260) rotate(28)"><rect x="-100" y="-300" width="1200" height="700" filter="url(#n)"/></g>
<rect width="100%" height="90" fill="url(#k)"/></svg>
<nav>${[['dFinder',1],['dLaunch'],['dSafari'],['dFox',1],['dCal'],['dMail',1],['dNotes',1],['dPrefs'],['dTele',1],['dAct'],['dSkype',1],['dWhats',1],['dEver'],['dWord',1],['dExcel',1],['dCalc'],['dTerm'],['dPS',1],['dMamp',1],['dZoom',1],['dPrev',1]].map(([n,o])=>`<dock-app name="${n}"${o?' open':''}></dock-app>`).join('')}<hr><dock-app name="dTrash"></dock-app></nav>`);

define('browser-window',
`:host{flex:1;min-height:0;display:flex;flex-direction:column;margin-top:2px;border-top:2px solid #55555b;border-radius:20px;overflow:hidden;background:#2b2a33}
.view{flex:1;min-height:0;display:flex}`,
`<browser-chrome></browser-chrome><div class="view"><pma-nav></pma-nav><pma-page></pma-page></div>`);
define('mac-desktop',`:host{display:flex;flex-direction:column;height:100vh}`,`<mac-menubar></mac-menubar><browser-window></browser-window><mac-dock></mac-dock>`);
</script>
</body>
</html>
